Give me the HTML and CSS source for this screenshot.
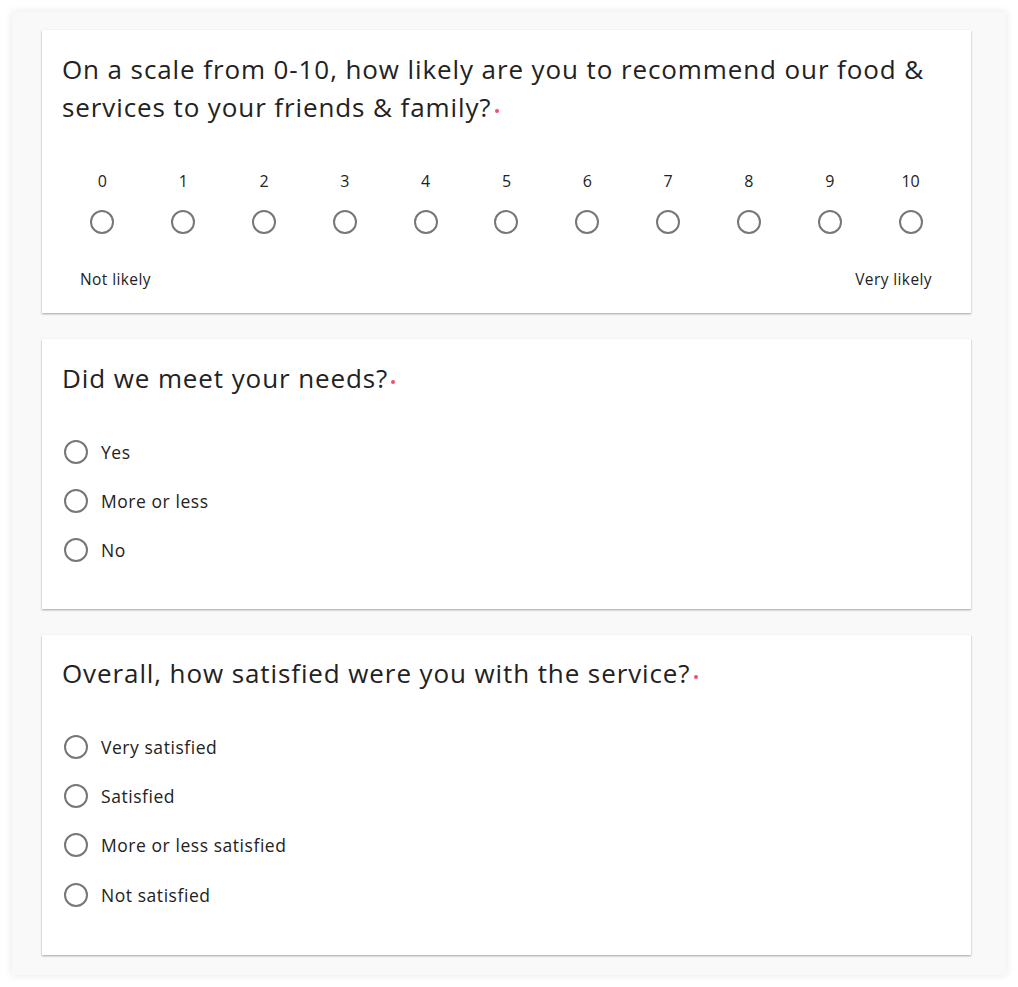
FILE: index.html
```html
<!DOCTYPE html>
<html>
<head>
<meta charset="utf-8">
<link rel="stylesheet" href="styles.css">
</head>
<body>
<div class="frame">
  <section class="card card-scale">
    <h2 class="q">On a scale from 0-10, how likely are you to recommend our food &amp; services to your friends &amp; family?<span class="req"></span></h2>
    <div class="scale">
      <div class="col"><span class="num">0</span><span class="radio"></span></div>
      <div class="col"><span class="num">1</span><span class="radio"></span></div>
      <div class="col"><span class="num">2</span><span class="radio"></span></div>
      <div class="col"><span class="num">3</span><span class="radio"></span></div>
      <div class="col"><span class="num">4</span><span class="radio"></span></div>
      <div class="col"><span class="num">5</span><span class="radio"></span></div>
      <div class="col"><span class="num">6</span><span class="radio"></span></div>
      <div class="col"><span class="num">7</span><span class="radio"></span></div>
      <div class="col"><span class="num">8</span><span class="radio"></span></div>
      <div class="col"><span class="num">9</span><span class="radio"></span></div>
      <div class="col"><span class="num">10</span><span class="radio"></span></div>
    </div>
    <div class="ends"><span>Not likely</span><span>Very likely</span></div>
  </section>

  <section class="card card-2">
    <h2 class="q">Did we meet your needs?<span class="req"></span></h2>
    <ul class="opts">
      <li><span class="radio"></span>Yes</li>
      <li><span class="radio"></span>More or less</li>
      <li><span class="radio"></span>No</li>
    </ul>
  </section>

  <section class="card card-3">
    <h2 class="q">Overall, how satisfied were you with the service?<span class="req"></span></h2>
    <ul class="opts">
      <li><span class="radio"></span>Very satisfied</li>
      <li><span class="radio"></span>Satisfied</li>
      <li><span class="radio"></span>More or less satisfied</li>
      <li><span class="radio"></span>Not satisfied</li>
    </ul>
  </section>
</div>
</body>
</html>
```

FILE: styles.css
```css
* { box-sizing: border-box; }
html, body { margin: 0; padding: 0; background: #ffffff; }
body {
  font-family: "Open Sans", "Noto Sans", sans-serif;
  color: #222;
}
.frame {
  margin: 12px;
  width: 994px;
  height: 963px;
  background: #f8f9f8;
  box-shadow: 0 0 8px rgba(0,0,0,0.10);
  padding: 18px 35px 0 30px;
  display: flex;
  flex-direction: column;
  gap: 26px;
}
.card {
  background: #fff;
  box-shadow: 0 1px 2px rgba(0,0,0,0.35);
  padding: 0 20px;
}
.q {
  margin: 0;
  font-weight: 400;
  font-size: 26px;
  line-height: 38px;
  color: #222;
  letter-spacing: 0.9px;
}
.req {
  display: inline-block;
  width: 4px;
  height: 4px;
  border-radius: 50%;
  background: #f0506e;
  vertical-align: 4px;
  margin-left: 3px;
}
.card-scale { height: 283px; padding-top: 20px; }
.scale {
  display: grid;
  grid-template-columns: repeat(11, 1fr);
  margin-top: 44px;
}
.col {
  display: flex;
  flex-direction: column;
  align-items: center;
}
.num { font-size: 16px; line-height: 22px; }
.radio {
  display: inline-block;
  width: 24px;
  height: 24px;
  border: 2px solid #777;
  border-radius: 50%;
  flex: none;
}
.col .radio { margin-top: 18px; }
.ends {
  display: flex;
  justify-content: space-between;
  padding: 0 19px 0 18px;
  margin-top: 35px;
  font-size: 15.5px;
  letter-spacing: 0.4px;
  line-height: 20px;
}
.card-2 { height: 270px; padding-top: 20px; }
.card-3 { height: 320px; padding-top: 19px; }
.opts {
  list-style: none;
  margin: 0;
  padding: 0;
}
.card-2 .opts { margin-top: 30px; }
.card-3 .opts { margin-top: 30px; }
.opts li {
  display: flex;
  align-items: center;
  height: 49.3px;
  font-size: 17.5px;
  letter-spacing: 0.55px;
  gap: 13px;
  padding-left: 2px;
}
```
